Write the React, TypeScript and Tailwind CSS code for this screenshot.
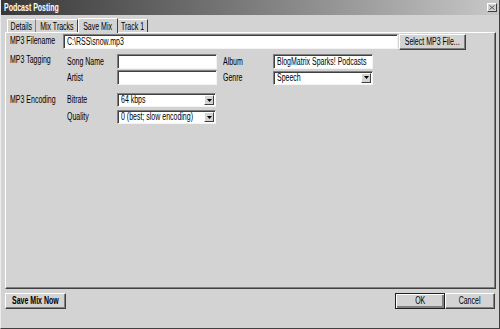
import React from "react";

const font = { fontFamily: '"Liberation Sans", Arial, sans-serif' };

// narrow Tahoma-like text: 10px face squeezed sideways
function T({ children, center = false }: { children: React.ReactNode; center?: boolean }) {
  return (
    <span className={`inline-block whitespace-nowrap scale-x-[0.7] ${center ? "origin-center" : "origin-left"}`}>
      {children}
    </span>
  );
}

function TextBox({ value = "", className = "" }: { value?: string; className?: string }) {
  return (
    <div
      className={`h-[15px] flex items-center bg-white border-t border-l border-t-[#808080] border-l-[#808080] border-b border-r border-b-[#f4f4f4] border-r-[#f4f4f4] shadow-[inset_1px_1px_0_#404040] pl-[3px] text-[10px] leading-[12px] text-black overflow-hidden ${className}`}
    >
      <T>{value}</T>
    </div>
  );
}

function Combo({ value, className = "" }: { value: string; className?: string }) {
  return (
    <div
      className={`h-[14px] flex items-center bg-white border-t border-l border-t-[#808080] border-l-[#808080] border-b border-r border-b-[#f4f4f4] border-r-[#f4f4f4] shadow-[inset_1px_1px_0_#404040] text-[10px] text-black ${className}`}
    >
      <div className="flex-1 flex items-center pl-[3px] leading-[12px] overflow-hidden">
        <T>{value}</T>
      </div>
      <div className="w-[10px] h-[10px] mr-[1px] bg-[#d3d3d3] border border-t-white border-l-white border-b-[#404040] border-r-[#404040] flex items-center justify-center">
        <svg width="5" height="3" viewBox="0 0 5 3">
          <path d="M0 0h5L2.5 3z" fill="#000" />
        </svg>
      </div>
    </div>
  );
}

function Button({ children, className = "", bold = false, def = false }: { children: React.ReactNode; className?: string; bold?: boolean; def?: boolean }) {
  return (
    <div
      className={`h-[16px] flex items-center justify-center bg-[#d3d3d3] border ${def ? "border-[#202020] shadow-[inset_1px_1px_0_#fff,inset_-2px_-2px_0_#808080]" : "border-t-white border-l-white border-b-[#404040] border-r-[#404040] shadow-[inset_-1px_-1px_0_#808080]"} text-[10px] leading-[12px] text-black ${bold ? "font-bold" : ""} ${className}`}
    >
      <T center>{children}</T>
    </div>
  );
}

export default function App() {
  return (
    <div style={font} className="antialiased w-[500px] h-[329px] bg-[#d3d3d3] border-l border-l-[#ececec] border-r border-b border-r-[#404040] border-b-[#404040] flex flex-col overflow-hidden">
      <div className="h-[15px] -ml-[1px] bg-gradient-to-r from-[#383838] via-[#7c7c7c] to-[#c8c8c8] flex items-center justify-between pl-[4px] pr-[2px]">
        <span className="text-white font-bold text-[10px] leading-[12px]">
          <T>Podcast Posting</T>
        </span>
        <div className="w-[10px] h-[9px] bg-[#d3d3d3] border border-t-white border-l-white border-b-[#404040] border-r-[#404040] flex items-center justify-center">
          <svg width="6" height="5" viewBox="0 0 6 5">
            <path d="M0.5 0.5l5 4M5.5 0.5l-5 4" stroke="#555" strokeWidth="1" />
          </svg>
        </div>
      </div>

      <div className="flex items-end h-[17px] pl-[6px] text-[10px] text-black">
        <div className="w-[29px] h-[13px] flex items-center justify-center border-t border-l border-t-white border-l-white border-r border-r-[#808080]">
          <T center>Details</T>
        </div>
        <div className="w-[42px] h-[13px] flex items-center justify-center border-t border-t-white border-r border-r-[#404040]">
          <T center>Mix Tracks</T>
        </div>
        <div className="w-[40px] h-[15px] flex items-center justify-center border-t border-l border-r border-t-white border-l-white border-r-[#404040] bg-[#d3d3d3] relative z-10 -mb-[1px]">
          <T center>Save Mix</T>
        </div>
        <div className="w-[30px] h-[13px] flex items-center justify-center border-t border-t-white border-r border-r-[#404040]">
          <T center>Track 1</T>
        </div>
      </div>

      <div className="ml-[4px] w-[491px] h-[257px] border border-t-white border-l-white border-b-[#404040] border-r-[#404040] shadow-[inset_-1px_-1px_0_#808080] text-[10px] text-black pl-[4px] pt-[1px]">
        <div className="flex items-start h-[16px]">
          <span className="w-[53px] leading-[12px] pt-[1px]">
            <T>MP3 Filename</T>
          </span>
          <TextBox value={"C:\\RSS\\snow.mp3"} className="w-[335px]" />
          <Button className="w-[67px] ml-[1px]">Select MP3 File...</Button>
        </div>

        <div className="flex mt-[4px]">
          <span className="w-[57px] leading-[12px]">
            <T>MP3 Tagging</T>
          </span>
          <div className="flex flex-col gap-[1px]">
            <div className="flex items-center">
              <span className="w-[50px] leading-[12px]">
                <T>Song Name</T>
              </span>
              <TextBox className="w-[100px]" />
              <span className="w-[50px] ml-[6px] leading-[12px]">
                <T>Album</T>
              </span>
              <TextBox value="BlogMatrix Sparks! Podcasts" className="w-[100px]" />
            </div>
            <div className="flex items-center">
              <span className="w-[50px] leading-[12px]">
                <T>Artist</T>
              </span>
              <TextBox className="w-[100px]" />
              <span className="w-[50px] ml-[6px] leading-[12px]">
                <T>Genre</T>
              </span>
              <Combo value="Speech" className="w-[100px]" />
            </div>
          </div>
        </div>

        <div className="flex mt-[8px]">
          <span className="w-[57px] leading-[12px] pt-[1px]">
            <T>MP3 Encoding</T>
          </span>
          <div className="flex flex-col gap-[3px]">
            <div className="flex items-center">
              <span className="w-[50px] leading-[12px]">
                <T>Bitrate</T>
              </span>
              <Combo value="64 kbps" className="w-[99px]" />
            </div>
            <div className="flex items-center">
              <span className="w-[50px] leading-[12px]">
                <T>Quality</T>
              </span>
              <Combo value="0 (best; slow encoding)" className="w-[99px]" />
            </div>
          </div>
        </div>
      </div>

      <div className="flex items-center mt-[4px] pl-[4px] pr-[4px]">
        <Button bold className="w-[61px]">Save Mix Now</Button>
        <div className="flex-1" />
        <Button def className="w-[50px]">OK</Button>
        <Button className="w-[50px]">Cancel</Button>
      </div>
    </div>
  );
}
